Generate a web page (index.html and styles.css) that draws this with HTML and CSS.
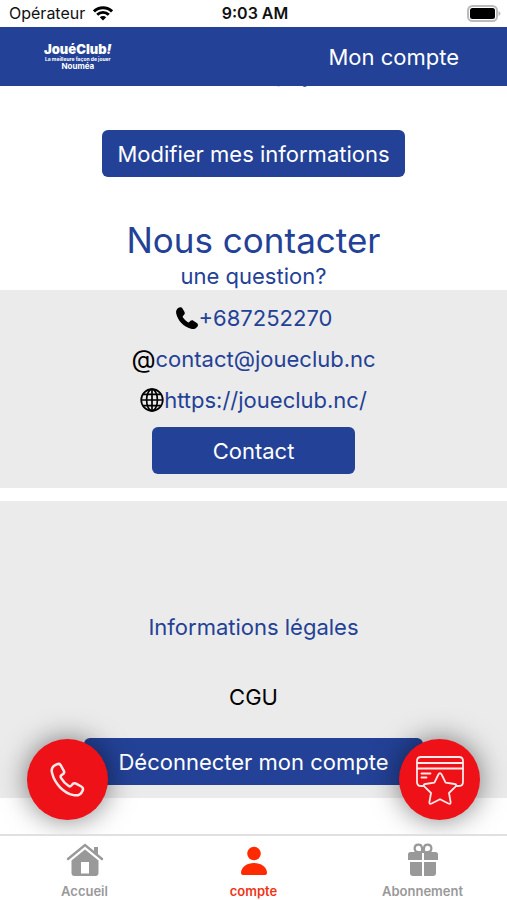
FILE: index.html
```
<!DOCTYPE html>
<html lang="fr">
<head>
    <meta charset="UTF-8">
    <meta name="viewport" content="width=device-width, initial-scale=1.0">
    <title>Mon compte</title>
    <link rel="stylesheet" href="styles.css">
</head>
<body>
    <div class="status-bar">
        <div class="carrier">
            <span>Opérateur</span>
            <svg width="20" height="15" viewBox="0 0 20 15" fill="none" stroke="#000" stroke-width="2.9">
                <path d="M1 5.4a12.8 12.8 0 0 1 18 0"/>
                <path d="M4.2 8.8a8.2 8.2 0 0 1 11.6 0"/>
                <path d="M10 14.6l-3.2-3.3a4.6 4.6 0 0 1 6.4 0z" fill="#000" stroke="none"/>
            </svg>
        </div>
        <time>9:03 AM</time>
        <svg class="battery" width="34" height="17" viewBox="0 0 34 17">
            <rect x="1" y="1" width="29" height="15" rx="4.5" fill="#fff" stroke="#bbb" stroke-width="2"/>
            <rect x="3" y="3" width="25" height="11" rx="2.5"/>
            <path d="M31.5 6v5q2-.8 2-2.500t-2-2.500z" fill="#bbb"/>
        </svg>
    </div>

    <header class="header">
        <a class="logo" href="#">
            <span class="logo-name">JouéClub<i>!</i></span>
            <span class="logo-tagline">La meilleure façon de jouer</span>
            <span class="logo-city">Nouméa</span>
        </a>
        <h1>Mon compte</h1>
    </header>

    <div class="screen">
        <main class="content">
            <p class="country">Code du pays</p>
            <button class="btn">Modifier mes informations</button>

            <h2>Nous contacter</h2>
            <p class="subtitle">une question?</p>

            <section class="panel contact">
                <a href="tel:+687252270">
                    <svg width="24" height="24" viewBox="0 0 24 24">
                        <path d="M3.600 1.700C5 .8 6.600 1 7.500 2.500l1.900 3.300c.7 1.200.5 2.400-.5 3.300l-.9.8c-.5.5-.4 1.100 0 1.700 1.300 1.900 2.700 3.300 4.600 4.500.7.400 1.200.4 1.700-.1l.9-.9c.9-.9 2.100-1.100 3.200-.4l3.400 2.200c1.300.9 1.600 2.300.7 3.600-1.500 2.200-3.900 3-6.500 2.300C8.600 20.800 2.700 14.500 1.200 7.500.7 5.100 1.500 3 3.600 1.700z"/>
                    </svg>
                    <span>+687252270</span>
                </a>
                <a href="mailto:contact@joueclub.nc">
                    <span class="at">@</span>
                    <span>contact@joueclub.nc</span>
                </a>
                <a href="https://joueclub.nc/">
                    <svg width="24" height="24" viewBox="0 0 24 24" fill="none" stroke="#000" stroke-width="1.700">
                        <circle cx="12" cy="12" r="10.800"/>
                        <ellipse cx="12" cy="12" rx="5.400" ry="10.800"/>
                        <path d="M12 1v22M1 12h22M3 6.300h18M3 17.700h18"/>
                    </svg>
                    <span>https://joueclub.nc/</span>
                </a>
                <button class="btn btn-contact">Contact</button>
            </section>

            <section class="panel legal">
                <h3>Informations légales</h3>
                <a href="#">CGU</a>
                <button class="btn btn-logout">Déconnecter mon compte</button>
            </section>
        </main>

        <button class="fab fab-call" aria-label="Appeler">
            <svg width="36" height="36" viewBox="0 0 36 36" fill="none" stroke="#ffe9e9" stroke-width="2.500" stroke-linejoin="round">
                <path d="M4.200 3.700 7.200 2.200c1.500-.7 2.800-.3 3.600 1.100l2.900 5.300c.8 1.400.4 2.700-.9 3.600l-1.500 1.100c-.8.6-.8 1.500-.3 2.500 2 3.500 4.400 6.100 7.700 8.200 1 .6 1.800.5 2.500-.3l1.300-1.500c1-1.100 2.200-1.300 3.600-.6l5.200 2.900c1.600.9 2.100 2.200 1.400 3.900-1.600 3.900-4.800 5.600-9.200 4.700C13.500 31 4.800 21.500 2.200 11.500 1.300 8.300 1.700 5.300 4.200 3.700z"/>
            </svg>
        </button>
        <button class="fab fab-card" aria-label="Carte de fidélité">
            <svg width="50" height="50" viewBox="0 0 50 50" fill="none" stroke="#ffe9e9" stroke-width="1.800" stroke-linejoin="round" stroke-linecap="round">
                <path d="M9 31H6q-4 0-4-4V6q0-4 4-4h38q4 0 4 4v21q0 4-4 4h-3"/>
                <path d="M2 8h46M2 13.500h46M6.500 18.500h9M6.500 22.500h5"/>
                <path d="M23.400 19.500q1.600-2.700 3.200 0l4 8.200 9 1.300q2.800.6.900 2.700l-6.500 6.300 1.600 9q.2 2.600-2.200 1.500L25 44.200l-8.400 4.300q-2.400 1.100-2.200-1.500l1.600-9-6.500-6.300q-1.900-2.100.9-2.700l9-1.300z" fill="#ee1118"/>
            </svg>
        </button>
    </div>

    <nav class="tab-bar">
        <a href="#">
            <svg width="38" height="34" viewBox="0 0 38 34" fill="#999">
                <path d="M2 16 19 2l17 14" fill="none" stroke="#999" stroke-width="2.400" stroke-linecap="round"/>
                <path d="M28 4h4v8l-4-3.300z"/>
                <path fill-rule="evenodd" d="M19 6.500 32.500 17.500V30q0 3-3 3h-21q-3 0-3-3V17.500zM15 19v11.500h8V19z"/>
            </svg>
            <span>Accueil</span>
        </a>
        <a class="active" href="#">
            <svg width="38" height="34" viewBox="0 0 38 34" fill="#ff2a00">
                <circle cx="19" cy="10.500" r="6.800"/>
                <path d="M6 30c0-6 6-10 13-10s13 4 13 10q0 2-2 2H8q-2 0-2-2z"/>
            </svg>
            <span>compte</span>
        </a>
        <a href="#">
            <svg width="38" height="34" viewBox="0 0 38 34" fill="#999">
                <path d="M18 9h-4a3.700 3.700 0 1 1 4-4zM20 9h4a3.700 3.700 0 1 0-4-4z" fill="none" stroke="#999" stroke-width="2.200"/>
                <path d="M6.500 9H18v8H4v-5.500Q4 9 6.500 9zM20 9h11.500q2.500 0 2.500 2.500V17H20zM6 19h12v14H9q-3 0-3-3zM20 19h12v11q0 3-3 3h-9z"/>
            </svg>
            <span>Abonnement</span>
        </a>
    </nav>
</body>
</html>
```
FILE: styles.css
```
* {
    box-sizing: border-box;
}
body {
    margin: 0;
    height: 100vh;
    display: flex;
    flex-direction: column;
    font-family: Inter, "Liberation Sans", sans-serif;
    font-size: 22px;
    line-height: 28px;
    color: #234196;
    background: #fff;
}
h1, h2, h3, p {
    margin: 0;
    font-size: 22px;
    font-weight: 400;
}
a {
    color: inherit;
    text-decoration: none;
}
svg {
    flex-shrink: 0;
}

/* status bar */
.status-bar {
    display: grid;
    grid-template-columns: 1fr auto 1fr;
    align-items: center;
    height: 27px;
    padding: 0 6px 0 9px;
    font-size: 16px;
    line-height: 27px;
    color: #111;
}
.carrier {
    display: flex;
    align-items: center;
    gap: 8px;
}
.status-bar time {
    font-weight: 600;
}
.battery {
    justify-self: end;
}

/* header */
.header {
    display: flex;
    align-items: center;
    justify-content: space-between;
    height: 59px;
    flex-shrink: 0;
    padding: 0 48px 0 44px;
    color: #fff;
    background: #234196;
}
.logo {
    display: flex;
    flex-direction: column;
    align-items: center;
    font-weight: 700;
}
.logo-name {
    font-size: 13px;
    font-weight: 900;
    line-height: 13px;
}
.logo-tagline {
    font-size: 5px;
    line-height: 6px;
}
.logo-city {
    font-size: 8px;
    line-height: 9px;
}

/* account content, scrolled under the header */
.screen {
    position: relative;
    flex: 1;
    min-height: 0;
    overflow: hidden;
}
.content {
    display: flex;
    flex-direction: column;
    align-items: center;
    margin-top: -26px;
}
.btn {
    height: 47px;
    padding: 0 15px;
    border: none;
    border-radius: 6px;
    font: inherit;
    color: #fff;
    background: #234196;
    cursor: pointer;
}
.country {
    margin-bottom: 42px;
}
h2 {
    margin-top: 41px;
    font-size: 35px;
    line-height: 44px;
}
.panel {
    display: flex;
    flex-direction: column;
    align-items: center;
    align-self: stretch;
    background: #ebebeb;
}
.contact {
    padding: 7px 0 14px;
}
.contact a {
    display: flex;
    align-items: center;
    height: 41px;
}
.at {
    font-size: 25px;
    color: #000;
}
.btn-contact {
    width: 40%;
    margin-top: 7px;
}
.legal {
    margin-top: 13px;
    padding: 112px 0 13px;
}
.legal a {
    margin-top: 42px;
    color: #000;
}
.btn-logout {
    margin-top: 27px;
    padding: 0 34px;
}

/* round buttons over the content */
.fab {
    position: absolute;
    bottom: 14px;
    display: flex;
    align-items: center;
    justify-content: center;
    width: 81px;
    height: 81px;
    padding: 0;
    border: none;
    border-radius: 50%;
    background: #ee1118;
    box-shadow: 0 0 28px rgba(0, 0, 0, 0.5);
    cursor: pointer;
}
.fab-call {
    left: 27px;
}
.fab-card {
    right: 27px;
}

/* tabs */
.tab-bar {
    display: grid;
    grid-template-columns: repeat(3, 1fr);
    height: 66px;
    border-top: 2px solid #e0e0e0;
    font-size: 13px;
    font-weight: 600;
    line-height: 16px;
    color: #999;
    background: #fff;
}
.tab-bar a {
    display: flex;
    flex-direction: column;
    align-items: center;
    gap: 6px;
    padding-top: 7px;
}
.tab-bar .active {
    color: #f03418;
}
```
